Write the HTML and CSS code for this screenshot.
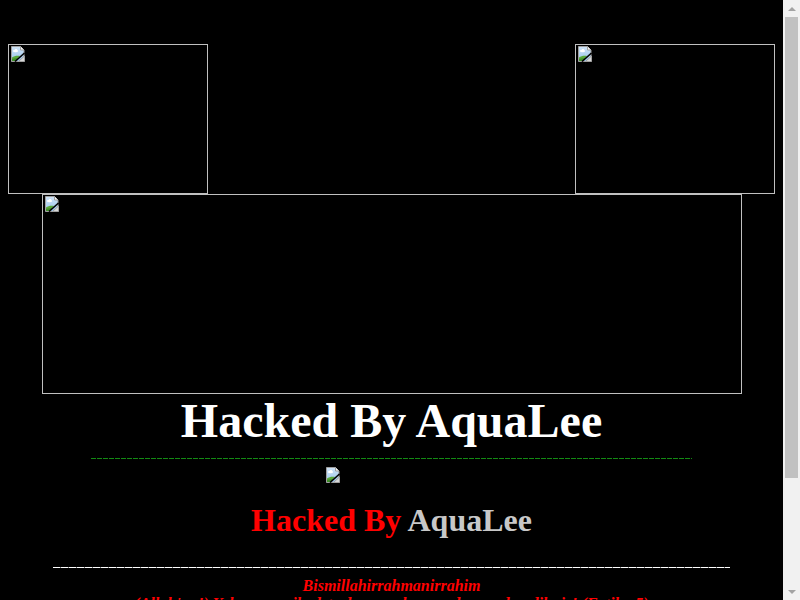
FILE: index.html
```html
<!DOCTYPE html>
<html>
<head>
<meta charset="utf-8">
<title>Hacked By AquaLee</title>
<link rel="stylesheet" href="styles.css">
</head>
<body>
<div class="page">
  <div class="top-row">
    <div class="broken small"><svg class="bi" width="16" height="16" viewBox="0 0 16 16"><use href="#brk"/></svg></div>
    <div class="broken small"><svg class="bi" width="16" height="16" viewBox="0 0 16 16"><use href="#brk"/></svg></div>
  </div>
  <div class="broken wide"><svg class="bi" width="16" height="16" viewBox="0 0 16 16"><use href="#brk"/></svg></div>
  <h1 class="title">Hacked By AquaLee</h1>
  <div class="green-rule"></div>
  <div class="icon-line"><svg width="16" height="16" viewBox="0 0 16 16"><use href="#brk"/></svg></div>
  <h2 class="subtitle"><span class="red">Hacked By</span> <span class="silver">AquaLee</span></h2>
  <div class="white-rule"></div>
  <p class="verse">Bismillahirrahmanirrahim</p>
  <p class="verse">(Allah'ım!) Yalnız sana ibadet eder ve yalnız senden yardım dileriz! (Fatiha 5)</p>
  <p class="verse">Biz Müslümanız, Allah'tan başka ilah yoktur.</p>
  <p class="verse">Greetz: All Muslim Hackers</p>
  <p class="verse">We Are Not Terrorist, We Are Muslim</p>
</div>
<div class="scrollbar" aria-hidden="true">
  <div class="sb-btn"><span class="arrow up"></span></div>
  <div class="sb-track"><div class="sb-thumb"></div></div>
  <div class="sb-btn"><span class="arrow down"></span></div>
</div>
<svg width="0" height="0" class="defs">
  <defs>
    <linearGradient id="sky" x1="0" y1="0" x2="0" y2="1">
      <stop offset="0" stop-color="#cfe3f7"/>
      <stop offset="1" stop-color="#9cc6ec"/>
    </linearGradient>
    <g id="brk">
      <path d="M1.5 0.5h9l3.5 3.5v11.5h-12.5z" fill="url(#sky)" stroke="#a0a0a0"/>
      <path d="M10.5 0.5v3.5h3.5" fill="#f4f4f4" stroke="#a0a0a0"/>
      <ellipse cx="5.5" cy="5" rx="2.6" ry="1.3" fill="#ffffff"/>
      <ellipse cx="6" cy="4" rx="1.3" ry="1.1" fill="#ffffff"/>
      <path d="M2 15V11.5C4 10 7 9.5 10 10L5 15z" fill="#5aa83a"/>
      <path d="M2 15V13C4 12 6 12 8 12.5L5.5 15z" fill="#3f8f2a"/>
      <path d="M5 15.5L14.5 7" stroke="#000" stroke-width="1.6"/>
      <path d="M8.5 15.5L14.5 10v5.5z" fill="#d8d8d8" stroke="#a0a0a0"/>
    </g>
  </defs>
</svg>
</body>
</html>
```

FILE: styles.css
```css
html, body {
  background: #000;
}
body {
  margin: 8px 25px 8px 8px;
  font-family: "Liberation Serif", "Times New Roman", serif;
  color: #fff;
}
.page {
  padding-top: 36px;
  padding-bottom: 40px;
}
.defs {
  position: absolute;
  width: 0;
  height: 0;
}
.top-row {
  display: flex;
  justify-content: space-between;
}
.broken {
  box-sizing: border-box;
  border: 1px solid #c0c0c0;
  padding: 1px;
}
.broken .bi {
  display: block;
}
.small {
  width: 200px;
  height: 150px;
}
.wide {
  width: 700px;
  height: 200px;
  margin: 0 auto;
}
.title {
  margin: 0;
  font-size: 48px;
  font-weight: bold;
  text-align: center;
  line-height: 53px;
  color: #fff;
}
.green-rule {
  width: 601px;
  height: 1px;
  margin: 11px auto 0;
  background: repeating-linear-gradient(to right, #138a13 0 5px, transparent 5px 6px);
}
.icon-line {
  padding-left: 317px;
  margin-top: 8px;
  height: 16px;
}
.icon-line svg {
  display: block;
}
.subtitle {
  margin: 19px 0 0;
  font-size: 32px;
  font-weight: bold;
  text-align: center;
  line-height: 36px;
}
.red {
  color: #ff0000;
}
.silver {
  color: #c8c8c8;
}
.white-rule {
  width: 677px;
  height: 1px;
  margin: 29px auto 0;
  background: repeating-linear-gradient(to right, #fff 0 7px, #777 7px 8px);
}
.verse {
  margin: 0;
  text-align: center;
  color: #ff0000;
  font-style: italic;
  font-weight: bold;
  font-size: 16px;
  line-height: 17px;
}
.white-rule + .verse {
  margin-top: 9px;
}
.verse + .verse {
  margin-top: 1px;
}

/* fake browser scrollbar overlay */
.scrollbar {
  position: fixed;
  top: 0;
  right: 0;
  width: 17px;
  height: 100vh;
  background: #f1f1f1;
  display: flex;
  flex-direction: column;
}
.sb-btn {
  height: 17px;
  display: flex;
  align-items: center;
  justify-content: center;
}
.arrow {
  width: 0;
  height: 0;
  border-left: 4px solid transparent;
  border-right: 4px solid transparent;
}
.arrow.up {
  border-bottom: 4px solid #a3a3a3;
}
.arrow.down {
  border-top: 4px solid #a3a3a3;
}
.sb-track {
  flex: 1;
  padding: 0 2px;
}
.sb-thumb {
  height: 461px;
  background: #c1c1c1;
}
```
